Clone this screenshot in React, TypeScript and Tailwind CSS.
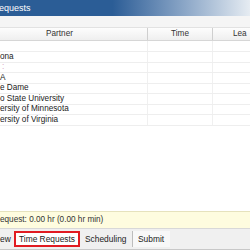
const rows = [
  { name: "", h: "h-[11px]" },
  { name: "ona", h: "h-[11px]" },
  { name: ":", h: "h-[10px]", faint: true },
  { name: "A", h: "h-[11px]" },
  { name: "e Dame", h: "h-[10px]" },
  { name: "o State University", h: "h-[11px]" },
  { name: "ersity of Minnesota", h: "h-[10px]" },
  { name: "ersity of Virginia", h: "h-[11px]" },
];

const tabs = [
  { label: "ew", active: false },
  { label: "Time Requests", active: true },
  { label: "Scheduling", active: false },
  { label: "Submit", active: false },
];

export default function App() {
  return (
    <div className="w-[250px] h-[250px] overflow-hidden bg-white flex flex-col text-[#222] font-['Liberation_Sans',Arial,sans-serif]">
      {/* window title */}
      <div className="h-[16px] shrink-0 flex items-center bg-linear-to-r from-[#2b5d96] from-45% to-[#e6ecf2] text-white text-[9px] leading-none">
        <span className="-ml-[1px]">equests</span>
      </div>

      {/* toolbar strip */}
      <div className="h-[12px] shrink-0 bg-[#f5f5f5] border-b border-[#e2e2e2]" />

      {/* grid header */}
      <div className="h-[13px] shrink-0 flex bg-linear-to-b from-[#fdfdfd] to-[#efefef] border-b border-[#d6d6d6] text-[8.2px] text-[#333] leading-none">
        <div className="w-[148px] flex items-center justify-center pr-[28px] border-r border-[#cfcfcf]">Partner</div>
        <div className="w-[65px] flex items-center justify-center border-r border-[#cfcfcf]">Time</div>
        <div className="flex-1 flex items-center pl-[20px]">Lea</div>
      </div>

      {/* grid rows */}
      <div className="flex-1 flex flex-col">
        {rows.map((r, i) => (
          <div key={i} className={`${r.h} shrink-0 flex border-b border-[#eeeeee] text-[8.2px] leading-none`}>
            <div className={`w-[148px] flex items-center border-r border-[#f0f0f0] whitespace-nowrap ${r.faint ? "pl-[2px] text-[#d9a6c4]" : ""}`}>
              {r.name}
            </div>
            <div className="w-[65px] border-r border-[#f0f0f0]" />
            <div className="flex-1" />
          </div>
        ))}
      </div>

      {/* status bar */}
      <div className="h-[18px] shrink-0 flex items-center bg-[#fefcdf] border-t border-[#e6e2bd] border-b border-b-[#d8d8d8] text-[8.2px] text-[#333] leading-none whitespace-nowrap">
        equest: 0.00 hr (0.00 hr min)
      </div>

      {/* tabs */}
      <div className="h-[21px] shrink-0 flex items-start bg-[#f0f0f0] border-b border-[#c8c8c8] pt-[2px] text-[8.4px] text-[#222] leading-none whitespace-nowrap">
        {tabs.map((t) =>
          t.active ? (
            <div key={t.label} className="h-[16px] ml-[2px] w-[66px] flex items-center justify-center bg-white border-2 border-[#e11b22]">
              {t.label}
            </div>
          ) : (
            <div
              key={t.label}
              className={`h-[16px] flex items-center ${
                t.label === "ew"
                  ? "w-[12px]"
                  : t.label === "Submit"
                  ? "w-[38px] pl-[5px] bg-[#f8f8f8] border-l border-[#bdbdbd]"
                  : "w-[52px] pl-[5px]"
              }`}
            >
              {t.label}
            </div>
          )
        )}
      </div>
    </div>
  );
}
